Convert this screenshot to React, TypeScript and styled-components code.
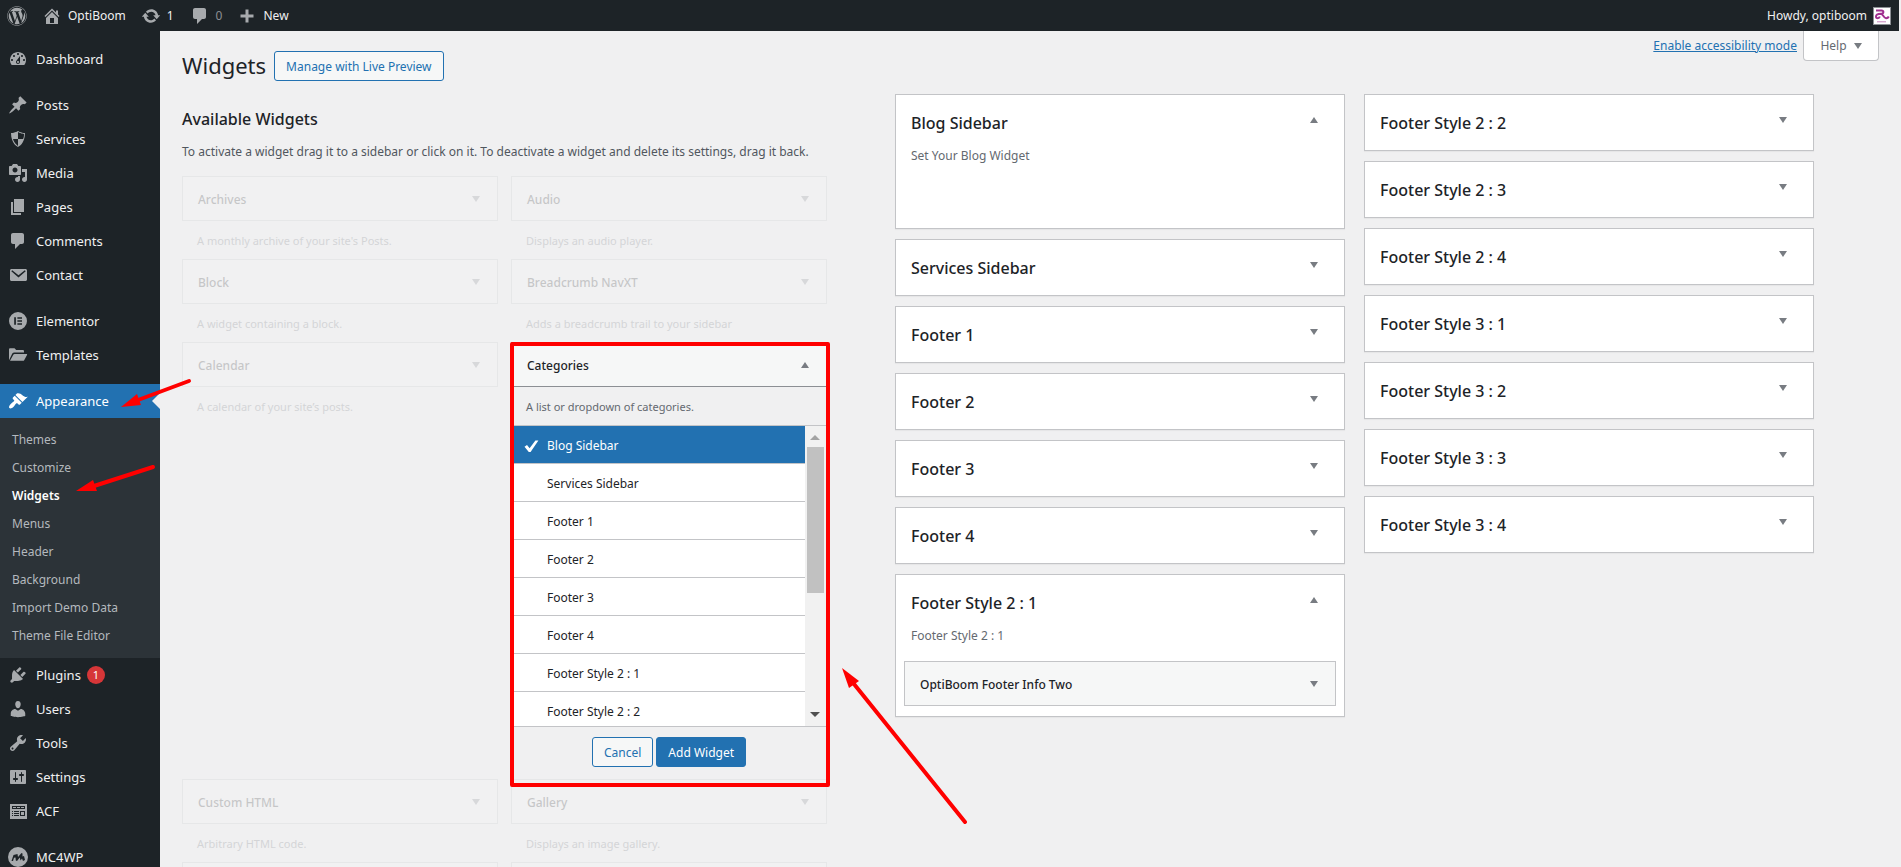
import React from "react";
import styled, { createGlobalStyle, css } from "styled-components";
import { FaWordpress } from "react-icons/fa";

const GlobalStyle = createGlobalStyle`
  *, *::before, *::after { box-sizing: border-box; }
  body {
    margin: 0;
    background: #f0f0f1;
    color: #1d2327;
    font-family: "Segoe UI", "Noto Sans", "Open Sans", sans-serif;
    font-size: 12px;
    line-height: 20px;
  }
  h1, h2, h3, p, ul { margin: 0; padding: 0; }
  ul { list-style: none; }
  button { font: inherit; cursor: pointer; }
  a { text-decoration: none; color: inherit; }
`;

const Shell = styled.div`
  position: relative;
  display: flex;
  flex-direction: column;
  height: 100vh;
  padding-right: 2px;
  overflow: hidden;
`;

const AdminBar = styled.header`
  display: flex;
  flex: none;
  justify-content: space-between;
  height: 31px;
  padding: 0 8px 0 7px;
  background: #1d2327;
  color: #f0f0f1;
`;

const BarGroup = styled.div`
  display: flex;
  align-items: center;
`;

const BarLink = styled.a<{ $muted?: boolean; $gap?: number }>`
  display: flex;
  align-items: center;
  gap: 6px;
  margin-right: ${(p) => p.$gap ?? 15}px;
  color: ${(p) => (p.$muted ? "#8c8f94" : "#f0f0f1")};
  svg { color: #a7aaad; }
`;

const Avatar = styled.svg`
  border: 1px solid #8c8f94;
  background: #fff;
`;

const Body = styled.div`
  display: flex;
  flex: 1;
  min-height: 0;
`;

const Sidebar = styled.nav`
  flex: none;
  width: 160px;
  padding-top: 11px;
  overflow: hidden;
  background: #1d2327;
  font-size: 13px;
`;

const MenuLink = styled.a<{ $active?: boolean }>`
  position: relative;
  display: flex;
  align-items: center;
  gap: 8px;
  height: 34px;
  padding-left: 8px;
  color: #f0f0f1;
  svg { color: #a7aaad; }
  ${(p) =>
    p.$active &&
    css`
      background: #2271b1;
      color: #fff;
      svg { color: #fff; }
      &::after {
        content: "";
        position: absolute;
        right: 0;
        top: 9px;
        border: 8px solid transparent;
        border-right-color: #f0f0f1;
        border-left-width: 0;
      }
    `}
`;

const Separator = styled.li`
  height: 12px;
`;

const Badge = styled.span`
  width: 18px;
  height: 18px;
  margin-left: -2px;
  border-radius: 9px;
  background: #d63638;
  color: #fff;
  font-size: 11px;
  line-height: 18px;
  text-align: center;
`;

const SubMenu = styled.ul`
  padding: 8px 0;
  background: #2c3338;
  font-size: 12px;
`;

const SubLink = styled.a<{ $current?: boolean }>`
  display: block;
  padding: 4px 12px;
  color: ${(p) => (p.$current ? "#fff" : "#b4b9be")};
  font-weight: ${(p) => (p.$current ? 600 : 400)};
`;

const Content = styled.main`
  flex: 1;
  min-width: 0;
  padding: 0 20px 0 22px;
  overflow: hidden;
`;

const PageHeader = styled.div`
  display: flex;
  justify-content: space-between;
  align-items: flex-start;
  height: 63px;
`;

const TitleGroup = styled.div`
  display: flex;
  align-items: center;
  gap: 8px;
  padding-top: 20px;
`;

const PageTitle = styled.h1`
  font-size: 22px;
  font-weight: 400;
  line-height: 28px;
  padding-bottom: 2px;
`;

const Button = styled.button<{ $primary?: boolean }>`
  height: 30px;
  padding: 2px 11px 0;
  border: 1px solid #2271b1;
  border-radius: 3px;
  background: ${(p) => (p.$primary ? "#2271b1" : "#f6f7f7")};
  color: ${(p) => (p.$primary ? "#fff" : "#2271b1")};
`;

const ScreenMeta = styled.div`
  display: flex;
  gap: 6px;
`;

const ModeLink = styled.a`
  padding-top: 5px;
  color: #2271b1;
  text-decoration: underline;
`;

const HelpButton = styled.button`
  display: flex;
  align-items: center;
  justify-content: center;
  gap: 7px;
  width: 76px;
  height: 30px;
  border: 1px solid #c3c4c7;
  border-top: 0;
  border-radius: 0 0 4px 4px;
  background: #fff;
  color: #646970;
`;

const Columns = styled.div`
  display: grid;
  grid-template-columns: minmax(0, 645fr) minmax(0, 919fr);
  column-gap: 68px;
  align-items: start;
  padding-right: 65px;
`;

const AvailableTitle = styled.h2`
  margin-top: 15px;
  font-size: 16px;
  font-weight: 500;
`;

const AvailableText = styled.p`
  margin: 13px 0 14px;
  color: #50575e;
  white-space: nowrap;
`;

const WidgetGrid = styled.div`
  display: grid;
  grid-template-columns: 1fr 1fr;
  column-gap: 13px;
`;

const WidgetCell = styled.section<{ $faded?: boolean }>`
  position: relative;
  opacity: ${(p) => (p.$faded ? 0.2 : 1)};
`;

const WidgetTop = styled.div<{ $open?: boolean }>`
  display: flex;
  align-items: center;
  justify-content: space-between;
  height: 45px;
  padding: 0 17px 0 15px;
  border: 1px solid ${(p) => (p.$open ? "#8c8f94" : "#c3c4c7")};
  background: #f6f7f7;
`;

const WidgetName = styled.h3`
  padding-top: 2px;
  font-size: 12px;
  font-weight: 500;
`;

const WidgetText = styled.p`
  padding: 11px 15px 9px;
  color: #646970;
  font-size: 11px;
  line-height: 18px;
`;

const Triangle = styled.span<{ $up?: boolean }>`
  border: 4px solid transparent;
  ${(p) =>
    p.$up
      ? "border-bottom: 6px solid #787c82; border-top-width: 0;"
      : "border-top: 6px solid #787c82; border-bottom-width: 0;"}
`;

const Chooser = styled.div`
  display: flex;
  height: 302px;
  border-top: 1px solid #c3c4c7;
  border-bottom: 1px solid #c3c4c7;
  overflow: hidden;
`;

const ChooserList = styled.ul`
  flex: 1;
  margin-left: 1px;
`;

const ChooserButton = styled.button<{ $selected?: boolean }>`
  display: flex;
  align-items: center;
  width: 100%;
  height: 38px;
  padding: 3px 0 0 9px;
  gap: 6px;
  border: 0;
  border-bottom: 1px solid #c3c4c7;
  background: ${(p) => (p.$selected ? "#2271b1" : "#fff")};
  color: ${(p) => (p.$selected ? "#fff" : "#1d2327")};
`;

const CheckSlot = styled.span`
  display: flex;
  width: 20px;
  height: 20px;
`;

const ScrollTrack = styled.div`
  display: flex;
  flex-direction: column;
  align-items: center;
  width: 22px;
  padding: 9px 2px 9px 0;
  background: #f1f1f1;
`;

const ScrollArrow = styled.span<{ $down?: boolean }>`
  border: 5px solid transparent;
  ${(p) =>
    p.$down
      ? "border-top-color: #505050; border-bottom: 0; margin-top: auto;"
      : "border-bottom-color: #a3a3a3; border-top: 0;"}
`;

const ScrollThumb = styled.span`
  width: 17px;
  height: 146px;
  margin-top: 7px;
  background: #c1c1c1;
`;

const ChooserActions = styled.div`
  display: flex;
  justify-content: center;
  gap: 3px;
  padding: 10px 0 12px;
`;

const Highlight = styled.div`
  position: absolute;
  inset: 0 -3px -8px -1px;
  z-index: 1;
  border: 4px solid #f00;
  border-radius: 2px;
  pointer-events: none;
`;

const SidebarColumns = styled.div`
  display: grid;
  grid-template-columns: 1fr 1fr;
  column-gap: 19px;
  align-items: start;
`;

const SidebarStack = styled.div`
  display: flex;
  flex-direction: column;
  gap: 10px;
`;

const Area = styled.section<{ $tall?: boolean }>`
  min-height: ${(p) => (p.$tall ? 135 : 57)}px;
  padding: 0 8px;
  border: 1px solid #c3c4c7;
  background: #fff;
  box-shadow: 0 1px 1px rgba(0, 0, 0, 0.04);
`;

const AreaTop = styled.div`
  display: flex;
  justify-content: space-between;
  align-items: flex-start;
  padding: 17px 18px 16px 7px;
`;

const AreaName = styled.h2`
  font-size: 16px;
  font-weight: 500;
  line-height: 22px;
`;

const AreaToggle = styled.span`
  display: flex;
  padding-top: 5px;
`;

const AreaText = styled.p`
  padding: 0 7px 15px;
  margin-top: -4px;
  color: #646970;
`;

const Placed = styled.div`
  margin-bottom: 10px;
`;

const Annotation = styled.svg`
  position: absolute;
  inset: 0;
  z-index: 2;
  width: 100%;
  height: 100%;
  pointer-events: none;
`;

const icons = {
  dashboard:
    "M3.76 16h12.48c1.1-1.37 1.76-3.11 1.76-5 0-4.42-3.58-8-8-8s-8 3.58-8 8c0 1.89.66 3.63 1.76 5zM10 4c.55 0 1 .45 1 1s-.45 1-1 1-1-.45-1-1 .45-1 1-1zM6 6c.55 0 1 .45 1 1s-.45 1-1 1-1-.45-1-1 .45-1 1-1zm8 0c.55 0 1 .45 1 1s-.45 1-1 1-1-.45-1-1 .45-1 1-1zm-5.37 5.55L12 7v6c0 1.1-.9 2-2 2s-2-.9-2-2c0-.57.24-1.08.63-1.45zM4 10c.55 0 1 .45 1 1s-.45 1-1 1-1-.45-1-1 .45-1 1-1zm12 0c.55 0 1 .45 1 1s-.45 1-1 1-1-.45-1-1 .45-1 1-1zm-5 3c0-.55-.45-1-1-1s-1 .45-1 1 .45 1 1 1 1-.45 1-1z",
  pin: "M10.44 3.02l1.82-1.82 6.36 6.35-1.83 1.82c-1.05-.68-2.48-.57-3.41.36l-.75.75c-.92.93-1.04 2.35-.35 3.41l-1.83 1.82-2.41-2.41-2.8 2.79c-.42.42-3.38 2.71-3.8 2.29s1.86-3.39 2.28-3.81l2.79-2.79L4.1 9.36l1.83-1.82c1.05.69 2.48.57 3.4-.36l.75-.75c.93-.92 1.05-2.35.36-3.41z",
  shield: "M10 2s3 2 7 2c0 11-7 14-7 14S3 15 3 4c4 0 7-2 7-2zm0 8h5s1-1 1-5c0 0-5-1-6-2v7H5c1 4 5 7 5 7v-7z",
  media:
    "M13 11V4c0-.55-.45-1-1-1h-1.67L9 1H5L3.67 3H2c-.55 0-1 .45-1 1v7c0 .55.45 1 1 1h10c.55 0 1-.45 1-1zM7 4.5c1.38 0 2.5 1.12 2.5 2.5S8.38 9.5 7 9.5 4.5 8.38 4.5 7 5.62 4.5 7 4.5zM14 6h5v10.5c0 1.38-1.12 2.5-2.5 2.5S14 17.88 14 16.5s1.12-2.5 2.5-2.5c.17 0 .34.02.5.05V9h-3V6zm-4 8.05V13h2v3.5c0 1.38-1.12 2.5-2.5 2.5S7 17.88 7 16.5 8.12 14 9.5 14c.17 0 .34.02.5.05z",
  page: "M6 15V2h10v13H6zm-1 1h8v2H3V5h2v11z",
  comment: "M5 2h9c1.1 0 2 .9 2 2v7c0 1.1-.9 2-2 2h-2l-5 5v-5H5c-1.1 0-2-.9-2-2V4c0-1.1.9-2 2-2z",
  mail: "M3.5 4h14c.8 0 1.5.7 1.5 1.5v9c0 .8-.7 1.5-1.5 1.5h-14c-.8 0-1.5-.7-1.5-1.5v-9C2 4.7 2.7 4 3.5 4zM4.2 5.3L3.3 6.2l7.2 6.3 7.2-6.3-.9-.9-6.300 4.900z",
  elementor:
    "M10 1a9 9 0 1 0 0 18 9 9 0 0 0 0-18zM6.2 6.2h1.700v7.600H6.200zM9.400 6.200h4.600v1.600H9.400zM9.400 9.200h4.600v1.600H9.400zM9.400 12.200h4.600v1.600H9.400z",
  folder:
    "M1 15.200V4.500C1 3.700 1.500 3.200 2.300 3.200h4.200l1.700 1.900h6.500c.8 0 1.300.5 1.300 1.300v1H6.300c-.9 0-1.600.4-2 1.200zM2 15.800l3.300-6c.3-.6.7-.9 1.300-.9H18.500c.6 0 .8.5.5 1l-2.700 5c-.3.6-.8.9-1.400.9z",
  brush:
    "M14.48 11.06L7.41 3.99l1.5-1.5c.5-.56 2.3-.47 3.51.32 1.21.8 1.43 1.28 2.91 2.1 1.18.64 2.45 1.26 4.45.85zm-.71.71L6.7 4.7 4.93 6.47c-.39.39-.39 1.02 0 1.41l1.06 1.06c.39.39.39 1.03 0 1.42-.6.6-1.43 1.11-2.21 1.69-.35.26-.7.53-1.01.84C1.43 14.23.4 16.08 1.4 17.07c.99 1 2.84-.03 4.18-1.36.31-.31.58-.66.85-1.02.57-.78 1.08-1.61 1.69-2.21.39-.39 1.02-.39 1.41 0l1.06 1.06c.39.39 1.02.39 1.41 0z",
  plug: "M13.11 4.36L9.87 7.6 8 5.73l3.24-3.24c.35-.34 1.05-.2 1.56.32.52.51.66 1.21.31 1.55zm-8 1.77l.91-1.12 9.01 9.01-1.19.84c-.71.71-2.63 1.16-3.82 1.16H6.14L4.9 17.26c-.59.59-1.54.59-2.12 0-.59-.58-.59-1.53 0-2.12l1.24-1.24v-3.88c0-1.13.4-3.19 1.09-3.89zm7.26 3.97l3.24-3.24c.34-.35 1.04-.21 1.55.31.52.51.66 1.21.31 1.55l-3.24 3.25z",
  user: "M10 9.25c-2.27 0-2.73-3.44-2.73-3.44C7 4.02 7.82 2 9.97 2c2.16 0 2.98 2.02 2.71 3.81 0 0-.41 3.44-2.68 3.44zm0 2.57L12.72 10c2.39 0 4.52 2.33 4.52 4.53v2.49s-3.65 1.13-7.24 1.13c-3.65 0-7.24-1.13-7.24-1.13v-2.49c0-2.25 1.94-4.48 4.47-4.48z",
  wrench:
    "M16.68 9.77c-1.34 1.34-3.3 1.67-4.95.99l-5.41 6.52c-.99.99-2.59.99-3.58 0s-.99-2.59 0-3.57l6.52-5.42c-.68-1.65-.35-3.61.99-4.95 1.28-1.28 3.12-1.62 4.72-1.06l-2.89 2.89 2.82 2.82 2.86-2.87c.53 1.58.18 3.39-1.08 4.65zM3.81 16.21c.4.39 1.04.39 1.43 0 .4-.4.4-1.04 0-1.43-.39-.4-1.03-.4-1.43 0-.39.39-.39 1.03 0 1.43z",
  sliders:
    "M18 16V4c0-.55-.45-1-1-1H3c-.55 0-1 .45-1 1v12c0 .55.45 1 1 1h14c.55 0 1-.45 1-1zM8 11h1c.55 0 1 .45 1 1s-.45 1-1 1H8v1.5c0 .28-.22.5-.5.5s-.5-.22-.5-.5V13H6c-.55 0-1-.45-1-1s.45-1 1-1h1V5.5c0-.28.22-.5.5-.5s.5.22.5.5V11zm5-2h-1c-.55 0-1-.45-1-1s.45-1 1-1h1V5.5c0-.28.22-.5.5-.5s.5.22.5.5V7h1c.55 0 1 .45 1 1s-.45 1-1 1h-1v5.5c0 .28-.22.5-.5.5s-.5-.22-.5-.5V9z",
  fields:
    "M2 3h17v15H2zM4 5h13v3H4zM5 6h3v1H5zM9 6h3v1H9zM13 6h3v1h-3zM4 10h1v1H4zM6 10h5v1H6zM4 12h1v1H4zM6 12h5v1H6zM4 14h1v1H4zM6 14h5v1H6zM12 10h5v5h-5zM13 11h3v3h-3z",
  mc: "M10 0a10 10 0 1 0 0 20 10 10 0 0 0 0-20zM3.500 14L5.500 8 9.500 7 10 10 13.500 6l1 .5v3L16 9l1 4-2 1-1-2.500-1.500 2-.7-3L9 14l-1.200-.5-.3-3-1.500.3L5 14z",
  home: "M16 8.5l1.53 1.53-1.06 1.06L10 4.6l-6.47 6.49-1.06-1.06L10 2.5l4 4v-2h2v4zm-6-2.46l6 5.99V18H4v-5.97zM12 17v-5H8v5h4z",
  update:
    "M10.2 3.28c3.53 0 6.43 2.61 6.92 6h2.08l-3.5 4-3.5-4h2.32c-.45-1.97-2.21-3.45-4.32-3.45-1.45 0-2.73.71-3.54 1.78L4.95 5.66C6.23 4.2 8.11 3.28 10.2 3.28zm-.4 13.44c-3.52 0-6.43-2.61-6.92-6H.8l3.5-4c1.17 1.33 2.33 2.67 3.5 4H5.48c.45 1.97 2.21 3.45 4.32 3.45 1.45 0 2.73-.71 3.54-1.78l1.71 1.95c-1.28 1.46-3.15 2.38-5.25 2.38z",
  plus: "M8.500 3.500h3v5h5v3h-5v5h-3v-5h-5v-3h5z",
  check: "M3.500 10.800l2.500-1.800 2.600 3.200L14.400 4.400l3 .2L9.600 16H7.800z",
};

type IconName = keyof typeof icons;

const Icon = ({ name }: { name: IconName }) => (
  <svg width="20" height="20" viewBox="0 0 20 20" fill="currentColor" fillRule="evenodd" aria-hidden="true">
    <path d={icons[name]} />
  </svg>
);

type MenuEntry = { label: string; icon: IconName; active?: boolean; badge?: string };

const menuGroups: MenuEntry[][] = [
  [{ label: "Dashboard", icon: "dashboard" }],
  [
    { label: "Posts", icon: "pin" },
    { label: "Services", icon: "shield" },
    { label: "Media", icon: "media" },
    { label: "Pages", icon: "page" },
    { label: "Comments", icon: "comment" },
    { label: "Contact", icon: "mail" },
  ],
  [
    { label: "Elementor", icon: "elementor" },
    { label: "Templates", icon: "folder" },
  ],
  [
    { label: "Appearance", icon: "brush", active: true },
    { label: "Plugins", icon: "plug", badge: "1" },
    { label: "Users", icon: "user" },
    { label: "Tools", icon: "wrench" },
    { label: "Settings", icon: "sliders" },
    { label: "ACF", icon: "fields" },
  ],
  [{ label: "MC4WP", icon: "mc" }],
];

const subItems = ["Themes", "Customize", "Widgets", "Menus", "Header", "Background", "Import Demo Data", "Theme File Editor"];

const choices = [
  "Blog Sidebar",
  "Services Sidebar",
  "Footer 1",
  "Footer 2",
  "Footer 3",
  "Footer 4",
  "Footer Style 2 : 1",
  "Footer Style 2 : 2",
];

const rightAreas = ["2 : 2", "2 : 3", "2 : 4", "3 : 1", "3 : 2", "3 : 3", "3 : 4"];

const FadedWidget = ({ name, text }: { name?: string; text?: string }) => (
  <WidgetCell $faded>
    <WidgetTop>
      {name && <WidgetName>{name}</WidgetName>}
      {name && <Triangle />}
    </WidgetTop>
    {text && <WidgetText>{text}</WidgetText>}
  </WidgetCell>
);

type AreaProps = { name: string; open?: boolean; tall?: boolean; text?: string; children?: React.ReactNode };

const WidgetArea = ({ name, open, tall, text, children }: AreaProps) => (
  <Area $tall={tall}>
    <AreaTop>
      <AreaName>{name}</AreaName>
      <AreaToggle>
        <Triangle $up={open} />
      </AreaToggle>
    </AreaTop>
    {text && <AreaText>{text}</AreaText>}
    {children}
  </Area>
);

const CategoriesWidget = () => (
  <WidgetCell>
    <WidgetTop $open>
      <WidgetName>Categories</WidgetName>
      <Triangle $up />
    </WidgetTop>
    <WidgetText>A list or dropdown of categories.</WidgetText>
    <Chooser>
      <ChooserList>
        {choices.map((choice, i) => (
          <li key={choice}>
            <ChooserButton $selected={i === 0}>
              <CheckSlot>{i === 0 && <Icon name="check" />}</CheckSlot>
              {choice}
            </ChooserButton>
          </li>
        ))}
      </ChooserList>
      <ScrollTrack aria-hidden="true">
        <ScrollArrow />
        <ScrollThumb />
        <ScrollArrow $down />
      </ScrollTrack>
    </Chooser>
    <ChooserActions>
      <Button>Cancel</Button>
      <Button $primary>Add Widget</Button>
    </ChooserActions>
    <Highlight />
  </WidgetCell>
);

export default function App() {
  return (
    <>
      <GlobalStyle />
      <Shell>
        <AdminBar>
          <BarGroup>
            <BarLink href="#" aria-label="About WordPress">
              <FaWordpress size={20} />
            </BarLink>
            <BarLink href="#">
              <Icon name="home" />
              OptiBoom
            </BarLink>
            <BarLink href="#" $gap={16}>
              <Icon name="update" />1
            </BarLink>
            <BarLink href="#" $muted>
              <Icon name="comment" />0
            </BarLink>
            <BarLink href="#">
              <Icon name="plus" />
              New
            </BarLink>
          </BarGroup>
          <BarLink href="#" $gap={0}>
            Howdy, optiboom
            <Avatar width="18" height="18" viewBox="0 0 16 16" fill="none" stroke="#a0308f" strokeWidth="2" aria-hidden="true">
              <path d="M2 2.500h5.500c2.500 0 2.500 3 0 3.300-3 .2-5.500.2-5.500 2.700 0 2.300 3.200 2.300 3.800 0M7 5.800c2 .2 2.500 4.200 5 4.400 1.300.1 2.200-.5 2.800-1.700" />
              <path d="M3 13.800h9" strokeWidth="1" strokeOpacity="0.6" />
            </Avatar>
          </BarLink>
        </AdminBar>

        <Body>
          <Sidebar>
            <ul>
              {menuGroups.map((group, g) => (
                <React.Fragment key={g}>
                  {g > 0 && <Separator />}
                  {group.map((entry) => (
                    <li key={entry.label}>
                      <MenuLink href="#" $active={entry.active}>
                        <Icon name={entry.icon} />
                        {entry.label}
                        {entry.badge && <Badge>{entry.badge}</Badge>}
                      </MenuLink>
                      {entry.active && (
                        <SubMenu>
                          {subItems.map((item) => (
                            <li key={item}>
                              <SubLink href="#" $current={item === "Widgets"}>
                                {item}
                              </SubLink>
                            </li>
                          ))}
                        </SubMenu>
                      )}
                    </li>
                  ))}
                </React.Fragment>
              ))}
            </ul>
          </Sidebar>

          <Content>
            <PageHeader>
              <TitleGroup>
                <PageTitle>Widgets</PageTitle>
                <Button>Manage with Live Preview</Button>
              </TitleGroup>
              <ScreenMeta>
                <ModeLink href="#">Enable accessibility mode</ModeLink>
                <HelpButton>
                  Help
                  <Triangle />
                </HelpButton>
              </ScreenMeta>
            </PageHeader>

            <Columns>
              <div>
                <AvailableTitle>Available Widgets</AvailableTitle>
                <AvailableText>
                  To activate a widget drag it to a sidebar or click on it. To deactivate a widget and delete its settings, drag it back.
                </AvailableText>
                <WidgetGrid>
                  <FadedWidget name="Archives" text="A monthly archive of your site's Posts." />
                  <FadedWidget name="Audio" text="Displays an audio player." />
                  <FadedWidget name="Block" text="A widget containing a block." />
                  <FadedWidget name="Breadcrumb NavXT" text="Adds a breadcrumb trail to your sidebar" />
                  <FadedWidget name="Calendar" text="A calendar of your site’s posts." />
                  <CategoriesWidget />
                  <FadedWidget name="Custom HTML" text="Arbitrary HTML code." />
                  <FadedWidget name="Gallery" text="Displays an image gallery." />
                  <FadedWidget />
                  <FadedWidget />
                </WidgetGrid>
              </div>

              <SidebarColumns>
                <SidebarStack>
                  <WidgetArea name="Blog Sidebar" open tall text="Set Your Blog Widget" />
                  <WidgetArea name="Services Sidebar" />
                  <WidgetArea name="Footer 1" />
                  <WidgetArea name="Footer 2" />
                  <WidgetArea name="Footer 3" />
                  <WidgetArea name="Footer 4" />
                  <WidgetArea name="Footer Style 2 : 1" open text="Footer Style 2 : 1">
                    <Placed>
                      <WidgetTop>
                        <WidgetName>OptiBoom Footer Info Two</WidgetName>
                        <Triangle />
                      </WidgetTop>
                    </Placed>
                  </WidgetArea>
                </SidebarStack>
                <SidebarStack>
                  {rightAreas.map((area) => (
                    <WidgetArea key={area} name={`Footer Style ${area}`} />
                  ))}
                </SidebarStack>
              </SidebarColumns>
            </Columns>
          </Content>
        </Body>

        <Annotation fill="#f00" stroke="#f00" strokeWidth="4" strokeLinecap="round" aria-hidden="true">
          <path d="M138 400L189 381" />
          <path d="M121 407l16-13 4 11z" strokeWidth="0" />
          <path d="M94 486L153 467" />
          <path d="M76 491l17-11 4 11z" strokeWidth="0" />
          <path d="M854 684L965 822" />
          <path d="M842 668l17 13-10 7z" strokeWidth="0" />
        </Annotation>
      </Shell>
    </>
  );
}
